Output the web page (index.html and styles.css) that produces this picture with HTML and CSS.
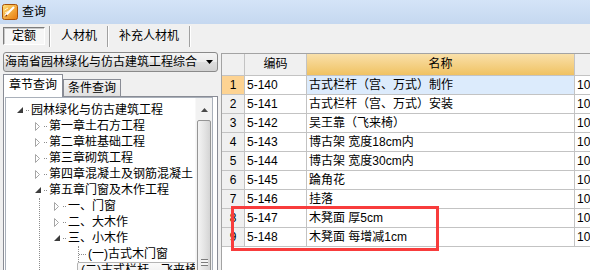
FILE: index.html
```html
<!DOCTYPE html>
<html lang="zh-CN">
<head>
    <meta charset="UTF-8">
    <title>查询</title>
    <link rel="stylesheet" href="styles.css">
</head>
<body>
    <div class="window">
        <div class="titlebar">
            <svg class="app-icon" width="16" height="16" viewBox="0 0 16 16">
                <defs>
                    <linearGradient id="ig" x1="0" y1="0" x2="1" y2="1">
                        <stop offset="0" stop-color="#ffe27a"/>
                        <stop offset="1" stop-color="#e8780c"/>
                    </linearGradient>
                </defs>
                <rect x="0.5" y="0.5" width="15" height="15" rx="2" fill="url(#ig)" stroke="#a8520a"/>
                <path d="M3 12 L12 3" stroke="#fff" stroke-width="2.2"/>
                <path d="M3.5 12.5 L5 11" stroke="#8a3a08" stroke-width="1.2"/>
                <path d="M2.5 6 L6 4 M3 9 L7 7" stroke="#fff6d8" stroke-width="1"/>
            </svg>
            <span class="title">查询</span>
        </div>

        <div class="toolbar">
            <button class="tool pressed">定额</button>
            <span class="sep first"></span>
            <button class="tool w-rcj">人材机</button>
            <span class="sep"></span>
            <button class="tool w-bc">补充人材机</button>
            <span class="sep"></span>
        </div>

        <div class="main">
            <div class="side">
                <div class="combo">
                    <span>海南省园林绿化与仿古建筑工程综合</span>
                    <svg class="combo-arrow" width="7" height="4" viewBox="0 0 7 4"><path d="M0 0 H7 L3.5 4 Z" fill="#000"/></svg>
                </div>
                <div class="tabs">
                    <div class="tab active">章节查询</div>
                    <div class="tab">条件查询</div>
                </div>
                <div class="tabpage">
                    <div class="tree">
                        <div class="items">
                            <div class="row lv0"><span class="tw"><svg width="6" height="6"><path d="M6 0 V6 H0 Z" fill="#3c3c3c"/></svg></span><span class="ln"></span><span>园林绿化与仿古建筑工程</span></div>
                            <div class="row lv1"><span class="tw"><svg width="5" height="9"><path d="M0.5 0.5 L4.5 4.5 L0.5 8.5 Z" fill="none" stroke="#a6a6a6"/></svg></span><span class="ln"></span><span>第一章土石方工程</span></div>
                            <div class="row lv1"><span class="tw"><svg width="5" height="9"><path d="M0.5 0.5 L4.5 4.5 L0.5 8.5 Z" fill="none" stroke="#a6a6a6"/></svg></span><span class="ln"></span><span>第二章桩基础工程</span></div>
                            <div class="row lv1"><span class="tw"><svg width="5" height="9"><path d="M0.5 0.5 L4.5 4.5 L0.5 8.5 Z" fill="none" stroke="#a6a6a6"/></svg></span><span class="ln"></span><span>第三章砌筑工程</span></div>
                            <div class="row lv1"><span class="tw"><svg width="5" height="9"><path d="M0.5 0.5 L4.5 4.5 L0.5 8.5 Z" fill="none" stroke="#a6a6a6"/></svg></span><span class="ln"></span><span>第四章混凝土及钢筋混凝土</span></div>
                            <div class="row lv1"><span class="tw"><svg width="6" height="6"><path d="M6 0 V6 H0 Z" fill="#3c3c3c"/></svg></span><span class="ln"></span><span>第五章门窗及木作工程</span></div>
                            <div class="group g1">
                                <div class="row lv2"><span class="tw"><svg width="5" height="9"><path d="M0.5 0.5 L4.5 4.5 L0.5 8.5 Z" fill="none" stroke="#a6a6a6"/></svg></span><span class="ln"></span><span>一、门窗</span></div>
                                <div class="row lv2"><span class="tw"><svg width="5" height="9"><path d="M0.5 0.5 L4.5 4.5 L0.5 8.5 Z" fill="none" stroke="#a6a6a6"/></svg></span><span class="ln"></span><span>二、大木作</span></div>
                                <div class="row lv2"><span class="tw"><svg width="6" height="6"><path d="M6 0 V6 H0 Z" fill="#3c3c3c"/></svg></span><span class="ln"></span><span>三、小木作</span></div>
                                <div class="group g2">
                                    <div class="row lv3"><span class="ln long"></span><span>(一)古式木门窗</span></div>
                                    <div class="row lv3"><span class="ln long"></span><span class="sel">(二)古式栏杆、飞来椅</span></div>
                                </div>
                            </div>
                        </div>
                        <div class="vscroll">
                            <div class="sbtn"><svg width="7" height="4"><path d="M0 4 L3.5 0 L7 4 Z" fill="#4a4a4a"/></svg></div>
                            <div class="thumb"><span class="grip"></span></div>
                        </div>
                    </div>
                </div>
            </div>

            <div class="grid">
                <div class="cell hd"></div>
                <div class="cell hd">编码</div>
                <div class="cell hd sorted">名称</div>
                <div class="cell hd"></div>

                <div class="cell num cur">1</div><div class="cell code">5-140</div><div class="cell name cur">古式栏杆（宫、万式）制作</div><div class="cell unit">10m</div>
                <div class="cell num">2</div><div class="cell code">5-141</div><div class="cell name">古式栏杆（宫、万式）安装</div><div class="cell unit">10m</div>
                <div class="cell num">3</div><div class="cell code">5-142</div><div class="cell name">吴王靠（飞来椅）</div><div class="cell unit">10m</div>
                <div class="cell num">4</div><div class="cell code">5-143</div><div class="cell name">博古架 宽度18cm内</div><div class="cell unit">10m</div>
                <div class="cell num">5</div><div class="cell code">5-144</div><div class="cell name">博古架 宽度30cm内</div><div class="cell unit">10m</div>
                <div class="cell num">6</div><div class="cell code">5-145</div><div class="cell name">踚角花</div><div class="cell unit">10m</div>
                <div class="cell num">7</div><div class="cell code">5-146</div><div class="cell name">挂落</div><div class="cell unit">10m</div>
                <div class="cell num">8</div><div class="cell code">5-147</div><div class="cell name">木凳面 厚5cm</div><div class="cell unit">10m</div>
                <div class="cell num">9</div><div class="cell code">5-148</div><div class="cell name">木凳面 每增减1cm</div><div class="cell unit">10m</div>
            </div>
        </div>

        <div class="mark"></div>
    </div>
</body>
</html>
```

FILE: styles.css
```css
* {
    box-sizing: border-box;
}
body {
    margin: 0;
    background: #f0f0f0;
    font-family: "Liberation Sans", "Noto Sans CJK SC", sans-serif;
    font-size: 12px;
    color: #000;
}
.window {
    position: relative;
    width: 590px;
    height: 270px;
    overflow: hidden;
}

/* title bar */
.titlebar {
    height: 24px;
    display: flex;
    align-items: center;
    padding-left: 2px;
    background: linear-gradient(#d4e4f7, #c5d8f0);
}
.app-icon {
    margin-right: 4px;
}
.title {
    line-height: 16px;
}

/* toolbar tabs */
.toolbar {
    height: 23px;
    display: flex;
    align-items: flex-start;
    padding: 3px 0 0 3px;
}
.tool {
    height: 18px;
    padding: 0;
    font: inherit;
    line-height: 16px;
    color: #000;
    background: none;
    border: 1px solid transparent;
    text-align: center;
}
.tool.pressed {
    width: 42px;
    background: #f7f7f7;
    border-color: #7c7c7c #ffffff #ffffff #7c7c7c;
    box-shadow: inset 1px 1px 0 #c8c8c8;
}
.tool.w-rcj {
    width: 56px;
}
.tool.w-bc {
    width: 80px;
}
.sep {
    width: 2px;
    height: 21px;
    margin-top: -1px;
    border-left: 1px solid #a0a0a0;
    border-right: 1px solid #ffffff;
}
.sep.first {
    margin-left: 4px;
}

/* main area */
.main {
    display: flex;
    height: 223px;
}
.side {
    width: 215px;
    margin-left: 3px;
    padding-top: 5px;
    display: flex;
    flex-direction: column;
}
.combo {
    height: 20px;
    display: flex;
    align-items: center;
    padding-left: 1px;
    border: 1px solid #8a8a8a;
    border-radius: 3px;
    background: linear-gradient(#f4f4f4 0%, #ececec 50%, #dedede 51%, #d2d2d2 100%);
    white-space: nowrap;
    line-height: 16px;
}
.combo-arrow {
    margin-left: auto;
    margin-right: 4px;
}
.tabs {
    display: flex;
    align-items: flex-end;
    height: 22px;
    margin-top: 2px;
    position: relative;
    z-index: 1;
}
.tab {
    height: 17px;
    width: 58px;
    border: 1px solid #898c95;
    border-bottom: none;
    background: linear-gradient(#f3f3f3, #e1e1e1);
    text-align: center;
    line-height: 16px;
}
.tab.active {
    width: 60px;
    height: 23px;
    margin-bottom: -1px;
    background: #fff;
    line-height: 21px;
}
.tabpage {
    flex: 1;
    border: 1px solid #898c95;
    border-bottom: none;
    background: #fff;
    padding: 0 4px 0 1px;
    min-height: 0;
}
.tree {
    height: 100%;
    display: flex;
    border: 1px solid #a9b0ba;
    border-bottom: none;
}
.items {
    flex: 1;
    padding-top: 4px;
    overflow: hidden;
    white-space: nowrap;
}
.row {
    height: 16px;
    display: flex;
    align-items: center;
    line-height: 16px;
}
.lv0 { padding-left: 11px; }
.lv1 { padding-left: 29px; }
.lv2 { padding-left: 14px; }
.tw {
    width: 9px;
    display: flex;
    align-items: center;
}
.ln {
    width: 3px;
    height: 0;
    margin: 1px 2px 0 0;
    border-top: 1px dotted #8c8c8c;
}
.ln.long {
    width: 7px;
    margin-right: 2px;
}
.group {
    border-left: 1px dotted #8c8c8c;
}
.g1 {
    margin-left: 33px;
}
.g2 {
    margin-left: 38px;
}
.sel {
    margin-left: -4px;
    padding: 0 3px;
    border: 1px solid #b4b4b4;
    border-radius: 2px;
    background: linear-gradient(#fafafa, #ececec);
    line-height: 15px;
}
.vscroll {
    width: 17px;
    background: #f2f2f2;
    border-left: 1px solid #f8f8f8;
}
.sbtn {
    height: 22px;
    display: flex;
    justify-content: center;
    padding-top: 10px;
}
.thumb {
    height: 300px;
    margin: 0 1px;
    border: 1px solid #959595;
    border-radius: 2px;
    background: linear-gradient(90deg, #f4f4f4, #e2e2e2 60%, #d4d4d4);
    display: flex;
    justify-content: center;
    padding-top: 138px;
}
.grip {
    width: 7px;
    height: 7px;
    background: repeating-linear-gradient(#7c7c7c 0 1px, #f4f4f4 1px 3px);
}

/* grid */
.grid {
    flex: 1;
    margin: 6px 0 0 3px;
    border-top: 1px solid #a3a3a3;
    border-left: 1px solid #a3a3a3;
    background: #fff;
    overflow: hidden;
    display: grid;
    grid-template-columns: 23px 62px 268px 80px;
    grid-template-rows: 22px;
    grid-auto-rows: 19px;
    align-content: start;
}
.cell {
    border-right: 1px solid #c3c3c3;
    border-bottom: 1px solid #c3c3c3;
    line-height: 18px;
    white-space: nowrap;
    overflow: hidden;
}
.hd {
    background: #f0f0f0;
    text-align: center;
    line-height: 21px;
}
.hd.sorted {
    background: linear-gradient(#f9e0aa, #f0c262);
}
.num {
    background: #f0f0f0;
    text-align: center;
}
.num.cur {
    background: #fdd392;
}
.code,
.name,
.unit {
    padding-left: 2px;
}
.name.cur {
    background: #dcebfc;
}

/* annotation box */
.mark {
    position: absolute;
    left: 231px;
    top: 206px;
    width: 208px;
    height: 45px;
    border: 3px solid #f83c3c;
}
```
